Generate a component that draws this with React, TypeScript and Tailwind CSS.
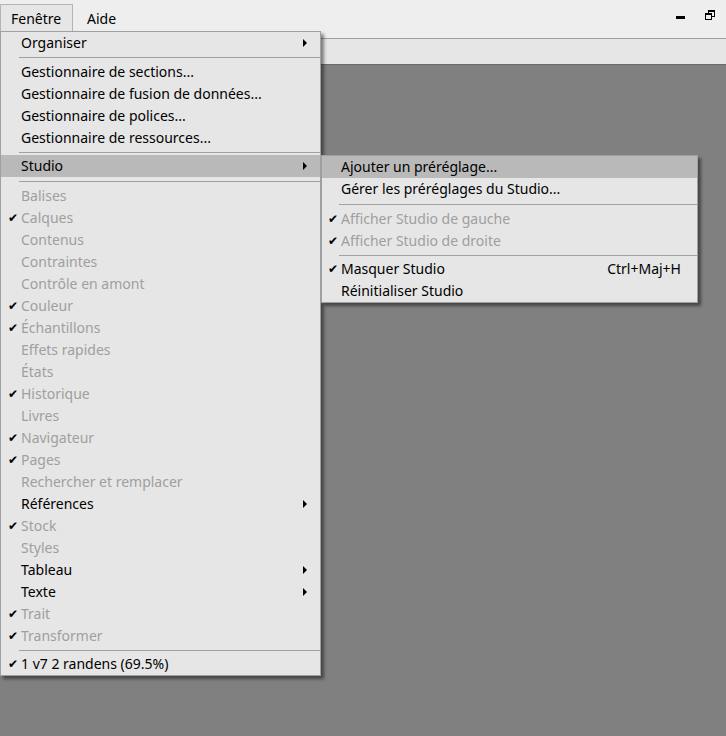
import React from "react";

type Item =
  | { sep: number }
  | { label: string; disabled?: boolean; check?: boolean; sub?: boolean; hl?: boolean; shortcut?: string };

const mainItems: Item[] = [
  { label: "Organiser", sub: true },
  { sep: 7 },
  { label: "Gestionnaire de sections..." },
  { label: "Gestionnaire de fusion de données..." },
  { label: "Gestionnaire de polices..." },
  { label: "Gestionnaire de ressources..." },
  { sep: 6 },
  { label: "Studio", sub: true, hl: true },
  { sep: 8 },
  { label: "Balises", disabled: true },
  { label: "Calques", disabled: true, check: true },
  { label: "Contenus", disabled: true },
  { label: "Contraintes", disabled: true },
  { label: "Contrôle en amont", disabled: true },
  { label: "Couleur", disabled: true, check: true },
  { label: "Échantillons", disabled: true, check: true },
  { label: "Effets rapides", disabled: true },
  { label: "États", disabled: true },
  { label: "Historique", disabled: true, check: true },
  { label: "Livres", disabled: true },
  { label: "Navigateur", disabled: true, check: true },
  { label: "Pages", disabled: true, check: true },
  { label: "Rechercher et remplacer", disabled: true },
  { label: "Références", sub: true },
  { label: "Stock", disabled: true, check: true },
  { label: "Styles", disabled: true },
  { label: "Tableau", sub: true },
  { label: "Texte", sub: true },
  { label: "Trait", disabled: true, check: true },
  { label: "Transformer", disabled: true, check: true },
  { sep: 6 },
  { label: "1 v7 2 randens (69.5%)", check: true },
];

const subItems: Item[] = [
  { label: "Ajouter un préréglage...", hl: true },
  { label: "Gérer les préréglages du Studio..." },
  { sep: 8 },
  { label: "Afficher Studio de gauche", disabled: true, check: true },
  { label: "Afficher Studio de droite", disabled: true, check: true },
  { sep: 6 },
  { label: "Masquer Studio", check: true, shortcut: "Ctrl+Maj+H" },
  { label: "Réinitialiser Studio" },
];

function Row({ item, checkCol, checkPad, sepLeft }: { item: Item; checkCol: string; checkPad: string; sepLeft: string }) {
  if ("sep" in item) {
    return (
      <div className="flex items-center" style={{ height: item.sep }}>
        <div className={`${sepLeft} flex-1 h-px bg-[#a0a0a0]`} />
      </div>
    );
  }
  return (
    <div
      className={`h-[22px] flex items-center ${item.hl ? "bg-[#b9b9b9]" : ""} ${
        item.disabled ? "text-[#9f9f9f]" : "text-black"
      }`}
    >
      <span className={`${checkCol} ${checkPad} shrink-0 text-[12px] leading-[22px] text-black`}>
        {item.check ? "✔" : ""}
      </span>
      <span className="whitespace-nowrap">{item.label}</span>
      {item.shortcut && <span className="ml-auto mr-[16px]">{item.shortcut}</span>}
      {item.sub && (
        <span className="ml-auto mr-[13px] w-0 h-0 border-y-[4px] border-y-transparent border-l-[4px] border-l-black" />
      )}
    </div>
  );
}

export default function App() {
  return (
    <div
      className="relative w-[726px] h-[736px] bg-[#808080] overflow-hidden text-[14px] leading-[22px]"
      style={{ fontFamily: '"Noto Sans", "Open Sans", sans-serif' }}
    >
      {/* menu bar */}
      <div className="h-[39px] bg-[#eeeeee] border-b border-[#a0a0a0] flex items-start">
        <div className="mt-[4px] h-[28px] w-[73px] border border-b-0 border-[#b4b4b4] bg-[#e6e6e6] pl-[10px] pt-[3px]">
          Fenêtre
        </div>
        <div className="mt-[8px] ml-[14px]">Aide</div>
        <div className="ml-auto mr-[11px] mt-[10px] flex items-start gap-[20px]">
          <div className="mt-[6px] w-[9px] h-[3px] bg-black" />
          <div className="relative w-[10px] h-[10px]">
            <div className="absolute left-[3px] top-0 w-[7px] h-[7px] border border-black border-t-2" />
            <div className="absolute left-0 top-[3px] w-[7px] h-[7px] border border-black border-t-2 bg-[#eeeeee]" />
          </div>
        </div>
      </div>
      <div className="h-[26px] bg-[#e6e6e6] border-b border-[#6a6a6a]" />

      {/* main menu (dropdown overlay) */}
      <div className="absolute left-0 top-[31px] w-[321px] bg-[#e6e6e6] border border-[#a0a0a0] shadow-[3px_3px_3px_rgba(0,0,0,0.45)]">
        {mainItems.map((it, i) => (
          <Row key={i} item={it} checkCol="w-[20px]" checkPad="pl-[7px]" sepLeft="ml-[18px]" />
        ))}
      </div>

      {/* sub menu (overlay) */}
      <div className="absolute left-[321px] top-[155px] w-[377px] bg-[#e6e6e6] border border-[#a0a0a0] shadow-[3px_3px_3px_rgba(0,0,0,0.45)]">
        {subItems.map((it, i) => (
          <Row key={i} item={it} checkCol="w-[19px]" checkPad="pl-[6px]" sepLeft="ml-[17px]" />
        ))}
      </div>
    </div>
  );
}
